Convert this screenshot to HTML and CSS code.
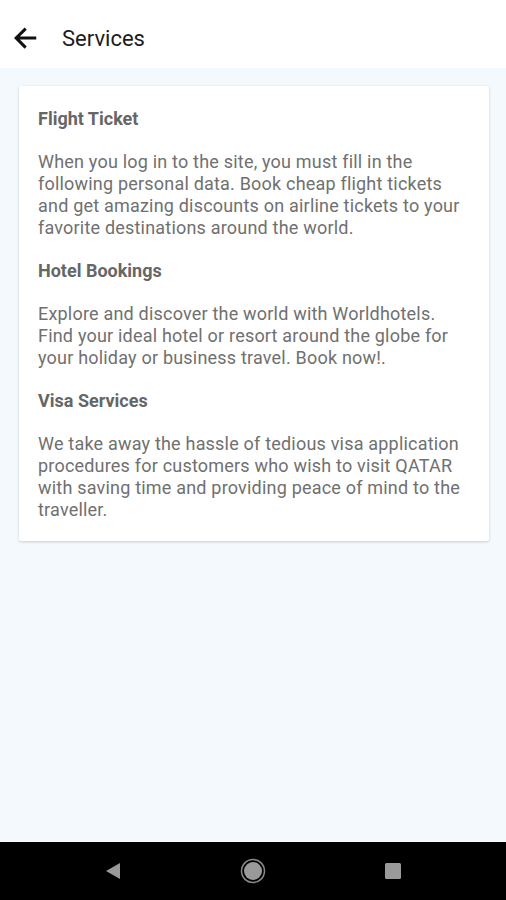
FILE: index.html
```html
<!DOCTYPE html>
<html lang="en">
<head>
  <meta charset="UTF-8">
  <meta name="viewport" content="width=device-width, initial-scale=1">
  <title>Services</title>
  <link rel="stylesheet" href="styles.css">
</head>
<body>
  <div class="screen">
    <header class="appbar">
      <svg class="back" width="24" height="24" viewBox="0 0 24 24">
        <path d="M21 10.8H7.9l5.5-5.5L11.7 3.5 3.2 12l8.5 8.5 1.7-1.8-5.5-5.5H21v-2.4z" fill="#111"/>
      </svg>
      <h1>Services</h1>
    </header>

    <main class="content">
      <div class="card">
        <h2>Flight Ticket</h2>
        <p>When you log in to the site, you must fill in the following personal data. Book cheap flight tickets and get amazing discounts on airline tickets to your favorite destinations around the world.</p>
        <h2>Hotel Bookings</h2>
        <p>Explore and discover the world with Worldhotels. Find your ideal hotel or resort around the globe for your holiday or business travel. Book now!.</p>
        <h2>Visa Services</h2>
        <p>We take away the hassle of tedious visa application procedures for customers who wish to visit QATAR with saving time and providing peace of mind to the traveller.</p>
      </div>
    </main>

    <nav class="navbar">
      <svg width="16" height="18" viewBox="0 0 16 18"><path d="M15 1 L1 9 L15 17 Z" fill="#9a9a9a"/></svg>
      <svg width="26" height="26" viewBox="0 0 26 26"><circle cx="13" cy="13" r="11.5" fill="none" stroke="#8a8a8a" stroke-width="1.5"/><circle cx="13" cy="13" r="9" fill="#9a9a9a"/></svg>
      <svg width="16" height="16" viewBox="0 0 16 16"><rect x="0" y="0" width="16" height="16" rx="1.5" fill="#9a9a9a"/></svg>
    </nav>
  </div>
</body>
</html>
```

FILE: styles.css
```css
/* Global */
*, *::before, *::after { box-sizing: border-box; }
body { margin: 0; font-family: Roboto, "Noto Sans", sans-serif; }

.screen {
  width: 506px;
  height: 900px;
  display: flex;
  flex-direction: column;
  background: #f3f9fd;
}

/* App bar */
.appbar {
  height: 68px;
  display: flex;
  align-items: center;
  padding: 8px 0 0 10px;
  background: #fff;
}
.back { width: 30px; height: 30px; margin-right: 22px; }
.appbar h1 {
  margin: 0;
  font-size: 22px;
  font-weight: 400;
  color: #1c1c1c;
}

/* Content */
.content { flex: 1; padding: 18px 17px 0 19px; }
.card {
  background: #fff;
  border-radius: 2px;
  box-shadow: 0 1px 3px rgba(0,0,0,0.18);
  padding: 22px 19px 20px;
  display: flex;
  flex-direction: column;
  gap: 21px;
}
.card h2 {
  margin: 0;
  font-size: 18px;
  line-height: 22px;
  font-weight: 700;
  color: #666;
}
.card p {
  margin: 0;
  font-size: 18px;
  line-height: 22px;
  letter-spacing: 0.2px;
  color: #707070;
}

/* System nav */
.navbar {
  height: 58px;
  background: #000;
  display: flex;
  align-items: center;
  justify-content: space-between;
  padding: 0 105px 0 105px;
}
```
